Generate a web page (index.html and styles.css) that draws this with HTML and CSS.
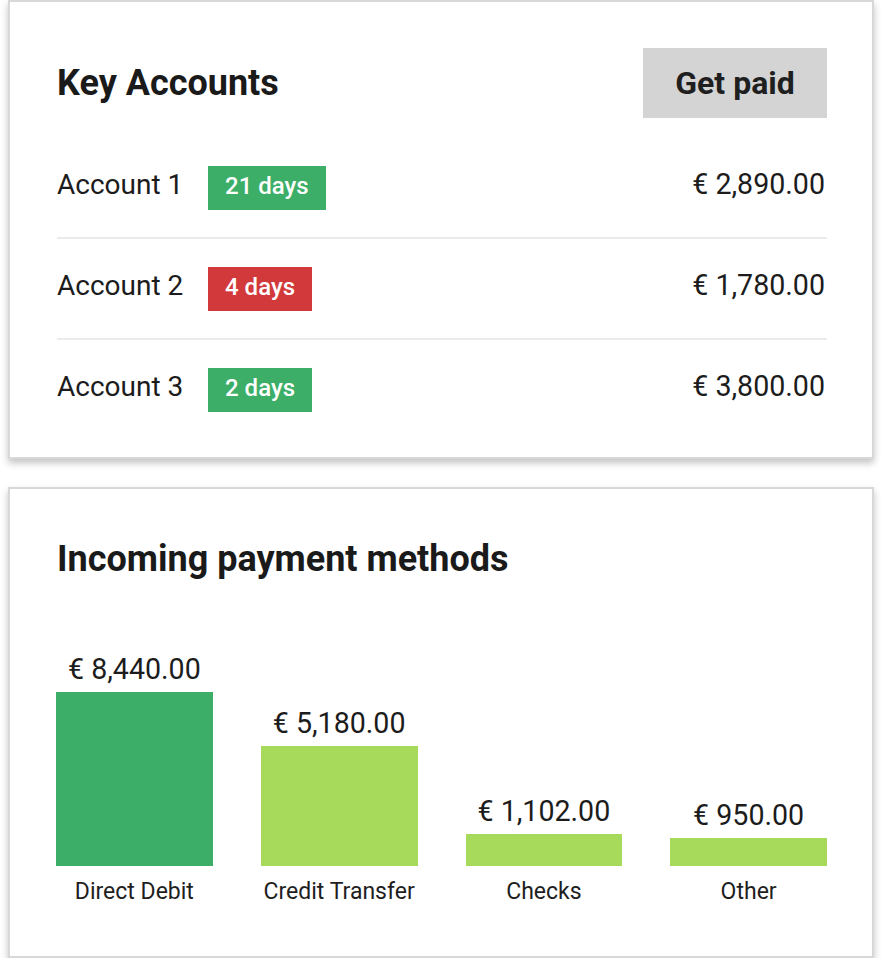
FILE: index.html
```html
<!DOCTYPE html>
<html lang="en">
<head>
<meta charset="utf-8">
<title>Dashboard</title>
<link rel="stylesheet" href="styles.css">
</head>
<body>
<div class="page">
  <section class="card card-accounts">
    <header class="card-header">
      <h2 class="card-title">Key Accounts</h2>
      <button class="btn">Get paid</button>
    </header>
    <ul class="account-list">
      <li class="account-row">
        <span class="account-name">Account 1</span>
        <span class="badge badge-green">21 days</span>
        <span class="account-amount">€ 2,890.00</span>
      </li>
      <li class="account-row">
        <span class="account-name">Account 2</span>
        <span class="badge badge-red">4 days</span>
        <span class="account-amount">€ 1,780.00</span>
      </li>
      <li class="account-row">
        <span class="account-name">Account 3</span>
        <span class="badge badge-green">2 days</span>
        <span class="account-amount">€ 3,800.00</span>
      </li>
    </ul>
  </section>

  <section class="card card-payments">
    <h2 class="card-title">Incoming payment methods</h2>
    <div class="chart">
      <div class="chart-col">
        <div class="chart-value">€ 8,440.00</div>
        <div class="chart-bar bar-dark" style="height:174px"></div>
        <div class="chart-label">Direct Debit</div>
      </div>
      <div class="chart-col">
        <div class="chart-value">€ 5,180.00</div>
        <div class="chart-bar bar-light" style="height:120px"></div>
        <div class="chart-label">Credit Transfer</div>
      </div>
      <div class="chart-col">
        <div class="chart-value">€ 1,102.00</div>
        <div class="chart-bar bar-light" style="height:32px"></div>
        <div class="chart-label">Checks</div>
      </div>
      <div class="chart-col">
        <div class="chart-value">€ 950.00</div>
        <div class="chart-bar bar-light" style="height:28px"></div>
        <div class="chart-label">Other</div>
      </div>
    </div>
  </section>
</div>
</body>
</html>
```

FILE: styles.css
```css
* {
  box-sizing: border-box;
}

html, body {
  margin: 0;
  padding: 0;
  background: #ffffff;
}

body {
  font-family: Roboto, "Liberation Sans", Arial, sans-serif;
  color: #1c1c1c;
}

.page {
  margin: 0 8px;
  display: flex;
  flex-direction: column;
  gap: 28px;
}

.card {
  background: #ffffff;
  border: 2px solid #d8d8d8;
  box-shadow: 0 4px 7px rgba(0, 0, 0, 0.24);
}

.card-accounts {
  padding: 46px 45px 18px 47px;
}

.card-payments {
  padding: 49px 45px 50px 47px;
}

.card-header {
  display: flex;
  align-items: center;
  justify-content: space-between;
  margin-bottom: 20px;
}

.card-title {
  margin: 0;
  font-size: 36px;
  line-height: 42px;
  font-weight: 700;
  color: #1a1a1a;
}

.btn {
  width: 184px;
  height: 70px;
  border: none;
  background: #d4d4d4;
  color: #1f1f1f;
  font-family: inherit;
  font-size: 32px;
  font-weight: 700;
  padding: 0;
  cursor: pointer;
}

.account-list {
  list-style: none;
  margin: 0;
  padding: 0;
}

.account-row {
  display: flex;
  align-items: baseline;
  padding: 28px 0 27px;
  border-bottom: 2px solid #ebebeb;
}

.account-row:last-child {
  border-bottom: none;
}

.account-name {
  font-size: 28px;
  width: 151px;
  flex: none;
}

.account-amount {
  margin-left: auto;
  font-size: 28.6px;
  margin-right: 2px;
}

.badge {
  display: inline-block;
  color: #ffffff;
  font-size: 24px;
  font-weight: 500;
  line-height: 28px;
  padding: 6px 17px 10px;
}

.badge-green {
  background: #3cae67;
}

.badge-red {
  background: #d2393b;
}

.chart {
  margin-top: 73px;
  display: grid;
  grid-template-columns: repeat(4, 1fr);
  column-gap: 48px;
  align-items: end;
  margin-left: -1px;
}

.chart-col {
  display: flex;
  flex-direction: column;
  align-items: stretch;
  text-align: center;
}

.chart-value {
  font-size: 28.6px;
  line-height: 32px;
  margin-bottom: 7px;
}

.chart-bar {
  width: 100%;
}

.bar-dark {
  background: #3cae67;
}

.bar-light {
  background: #a7d95a;
}

.chart-label {
  margin-top: 12px;
  font-size: 23px;
  line-height: 28px;
  color: #1e1e1e;
}
```
